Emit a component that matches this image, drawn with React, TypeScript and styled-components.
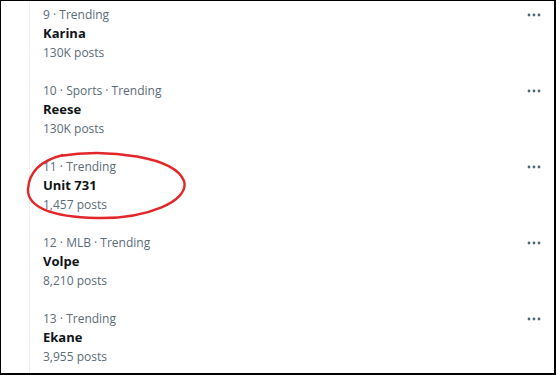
import React from 'react';
import styled, { createGlobalStyle } from 'styled-components';

const GlobalStyle = createGlobalStyle`
  html, body {
    margin: 0;
    padding: 0;
    background: #fff;
  }
  body {
    font-family: "Open Sans", "Noto Sans", Arial, sans-serif;
  }
`;

type Trend = {
  rank: number;
  category?: string;
  name: string;
  posts: string;
};

const trends: Trend[] = [
  { rank: 9, name: 'Karina', posts: '130K posts' },
  { rank: 10, category: 'Sports', name: 'Reese', posts: '130K posts' },
  { rank: 11, name: 'Unit 731', posts: '1,457 posts' },
  { rank: 12, category: 'MLB', name: 'Volpe', posts: '8,210 posts' },
  { rank: 13, name: 'Ekane', posts: '3,955 posts' },
];

const MoreIcon = () => (
  <svg width="14" height="4" viewBox="0 0 14 4">
    <circle cx="2" cy="2" r="1.4" fill="#536471" />
    <circle cx="7" cy="2" r="1.4" fill="#536471" />
    <circle cx="12" cy="2" r="1.4" fill="#536471" />
  </svg>
);

const App: React.FC = () => {
  return (
    <>
      <GlobalStyle />
      <Frame>
        <Gutter />
        <List>
          {trends.map((t) => (
            <Row key={t.rank}>
              <Info>
                <Meta>
                  {t.rank} · {t.category ? `${t.category} · ` : ''}Trending
                </Meta>
                <Title>{t.name}</Title>
                <Meta>{t.posts}</Meta>
              </Info>
              <More>
                <MoreIcon />
              </More>
              {t.rank === 11 && (
                <Circle viewBox="0 0 164 70" width="164" height="70">
                  <path
                    d="M34 5 C 84 -3, 150 6, 159 30 C 165 50, 122 68, 72 67 C 26 66, 2 56, 3 38 C 4 22, 14 10, 38 4"
                    fill="none"
                    stroke="#e3262a"
                    strokeWidth="2.4"
                  />
                </Circle>
              )}
            </Row>
          ))}
        </List>
      </Frame>
    </>
  );
};

const Frame = styled.div`
  box-sizing: border-box;
  width: 556px;
  height: 375px;
  border-top: 1px solid #000;
  border-left: 1px solid #000;
  border-right: 2px solid #000;
  border-bottom: 2px solid #000;
  display: flex;
  overflow: hidden;
  background: #fff;
`;

const Gutter = styled.div`
  width: 28px;
  flex-shrink: 0;
  border-right: 1px solid #eceff1;
`;

const List = styled.div`
  flex: 1;
  display: flex;
  flex-direction: column;
  margin-top: -5px;
`;

const Row = styled.div`
  position: relative;
  display: flex;
  justify-content: space-between;
  align-items: flex-start;
  padding: 10px 13px 11px 13px;
`;

const Info = styled.div`
  display: flex;
  flex-direction: column;
`;

const Meta = styled.span`
  font-size: 12px;
  line-height: 17px;
  color: #5b6b78;
`;

const Title = styled.span`
  font-size: 13px;
  line-height: 21px;
  font-weight: 700;
  color: #0f1419;
`;

const More = styled.div`
  display: flex;
  align-items: center;
  height: 17px;
`;

const Circle = styled.svg`
  position: absolute;
  left: -5px;
  top: 3px;
  pointer-events: none;
`;

export default App;
